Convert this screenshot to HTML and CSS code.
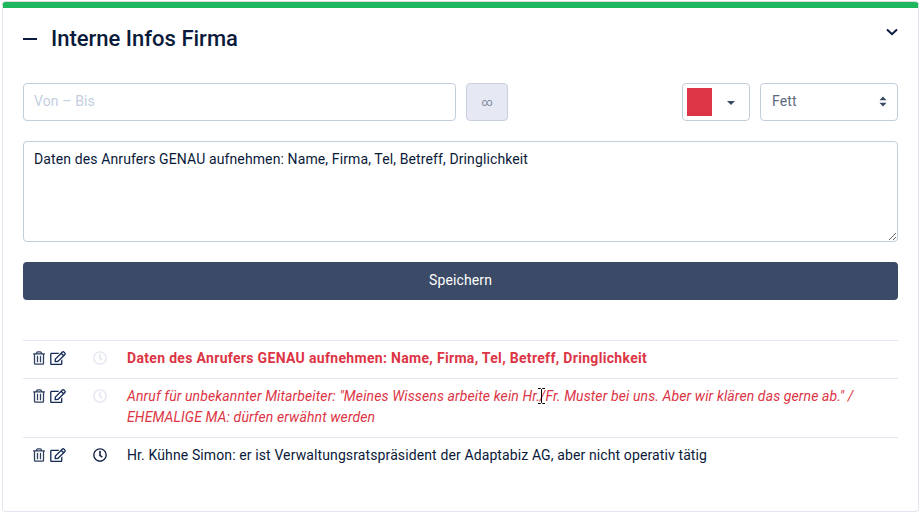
FILE: index.html
```html
<!DOCTYPE html>
<html lang="de">
<head>
<meta charset="utf-8">
<title>Interne Infos Firma</title>
<link rel="stylesheet" href="styles.css">
</head>
<body>
<section class="card">
  <header class="card-head">
    <span class="dash"></span>
    <h2 class="title">Interne Infos Firma</h2>
    <svg class="chevron" viewBox="0 0 12 8"><path d="M1 1.500 6 6.200 11 1.500" fill="none" stroke="currentColor" stroke-width="2"/></svg>
  </header>
  <div class="controls">
    <input class="field range" type="text" placeholder="Von – Bis">
    <button class="infinity" type="button">∞</button>
    <div class="spacer"></div>
    <div class="field color-pick"><span class="swatch"></span><span class="caret"></span></div>
    <div class="field weight">
      <span>Fett</span>
      <svg class="updown" viewBox="0 0 10 14"><path d="M5 0.500 9.500 5.500H.5zM5 13.500 .5 8.500H9.500z" fill="currentColor"/></svg>
    </div>
  </div>
  <textarea class="note">Daten des Anrufers GENAU aufnehmen: Name, Firma, Tel, Betreff, Dringlichkeit</textarea>
  <button class="save" type="button">Speichern</button>
  <ul class="list">
    <li class="row">
      <span class="icons">
        <svg class="ico trash" viewBox="0 0 448 512"><use href="#i-trash"/></svg>
        <svg class="ico edit" viewBox="0 0 576 512"><use href="#i-edit"/></svg>
      </span>
      <svg class="ico clock off" viewBox="0 0 512 512"><use href="#i-clock"/></svg>
      <p class="text strong">Daten des Anrufers GENAU aufnehmen: Name, Firma, Tel, Betreff, Dringlichkeit</p>
    </li>
    <li class="row">
      <span class="icons">
        <svg class="ico trash" viewBox="0 0 448 512"><use href="#i-trash"/></svg>
        <svg class="ico edit" viewBox="0 0 576 512"><use href="#i-edit"/></svg>
      </span>
      <svg class="ico clock off" viewBox="0 0 512 512"><use href="#i-clock"/></svg>
      <p class="text alert">Anruf für unbekannter Mitarbeiter: "Meines Wissens arbeite kein Hr./Fr. Muster bei uns. Aber wir klären das gerne ab." / EHEMALIGE MA: dürfen erwähnt werden</p>
      <svg class="cursor" viewBox="0 0 9 16"><path d="M1 .5H3.500L4.500 1.500 5.500 .5H8M4.500 1.500V14.500M1 15.500H3.500L4.500 14.500 5.500 15.500H8" fill="none" stroke="#000" stroke-width="1"/></svg>
    </li>
    <li class="row">
      <span class="icons">
        <svg class="ico trash" viewBox="0 0 448 512"><use href="#i-trash"/></svg>
        <svg class="ico edit" viewBox="0 0 576 512"><use href="#i-edit"/></svg>
      </span>
      <svg class="ico clock" viewBox="0 0 512 512"><use href="#i-clock"/></svg>
      <p class="text">Hr. Kühne Simon: er ist Verwaltungsratspräsident der Adaptabiz AG, aber nicht operativ tätig</p>
    </li>
  </ul>
</section>
<svg class="defs" aria-hidden="true">
  <defs>
    <path id="i-clock" fill="currentColor" d="M256 8C119 8 8 119 8 256s111 248 248 248 248-111 248-248S393 8 256 8zm0 448c-110.500 0-200-89.500-200-200S145.500 56 256 56s200 89.500 200 200-89.500 200-200 200zm61.800-104.400l-84.900-61.700c-3.100-2.300-4.900-5.900-4.900-9.700V116c0-6.600 5.400-12 12-12h32c6.600 0 12 5.400 12 12v141.700l66.800 48.600c5.400 3.900 6.500 11.400 2.600 16.800L334.600 349c-3.900 5.300-11.400 6.500-16.800 2.600z"/>
    <path id="i-trash" fill="currentColor" d="M268 416h24a12 12 0 0 0 12-12V188a12 12 0 0 0-12-12h-24a12 12 0 0 0-12 12v216a12 12 0 0 0 12 12zM432 80h-82.410l-34-56.700A48 48 0 0 0 274.410 0H173.590a48 48 0 0 0-41.160 23.300L98.410 80H16A16 16 0 0 0 0 96v16a16 16 0 0 0 16 16h16v336a48 48 0 0 0 48 48h288a48 48 0 0 0 48-48V128h16a16 16 0 0 0 16-16V96a16 16 0 0 0-16-16zM171.840 50.910A6 6 0 0 1 177 48h94a6 6 0 0 1 5.150 2.910L293.610 80H154.390zM368 464H80V128h288zm-212-48h24a12 12 0 0 0 12-12V188a12 12 0 0 0-12-12h-24a12 12 0 0 0-12 12v216a12 12 0 0 0 12 12z"/>
    <path id="i-edit" fill="currentColor" d="M402.300 344.900l32-32c5-5 13.700-1.500 13.700 5.700V464c0 26.500-21.500 48-48 48H48c-26.500 0-48-21.500-48-48V112c0-26.500 21.500-48 48-48h273.500c7.100 0 10.700 8.600 5.700 13.700l-32 32c-1.500 1.500-3.500 2.300-5.700 2.300H48v352h352V350.500c0-2.100.8-4.100 2.300-5.600zm156.600-201.800L296.300 405.700l-90.400 10c-26.200 2.900-48.500-19.200-45.600-45.600l10-90.400L432.900 17.100c22.900-22.900 59.900-22.900 82.700 0l43.200 43.200c22.900 22.900 22.900 60 .1 82.800zM460.100 174L402 115.900 216.200 301.800l-7.300 65.300 65.300-7.300L460.100 174zm64.800-79.700l-43.200-43.200c-4.100-4.100-10.800-4.100-14.800 0L436 82l58.100 58.100 30.900-30.900c4-4.200 4-10.800-.1-14.900z"/>
  </defs>
</svg>
</body>
</html>
```
FILE: styles.css
```css
* { box-sizing: border-box; }
html, body { margin: 0; height: 100%; background: #fff; }
body {
  padding: 2px;
  font-family: "Roboto", "Liberation Sans", sans-serif;
  font-size: 14px;
  line-height: 21px;
  letter-spacing: .115px;
  color: #0a1a3a;
  overflow: hidden;
}
.card {
  width: 917px;
  height: 510px;
  padding: 0 20px;
  border: 1px solid #e3e6f0;
  border-top: 6px solid #1cb75e;
  border-radius: 4px;
  box-shadow: 0 -1px 0 #dcdcdc;
}
.card-head {
  display: flex;
  align-items: center;
  height: 75px;
  padding-bottom: 14px;
}
.dash { width: 14px; height: 2px; background: #0b1a3d; }
.title {
  margin: 0 0 0 14px;
  flex: 1;
  font-size: 22px;
  line-height: 28px;
  font-weight: 500;
  letter-spacing: 0;
  color: #0a1a3a;
}
.chevron { width: 12px; height: 8px; margin: -13px 0 0; color: #0b1a3d; }
.controls { display: flex; align-items: stretch; height: 38px; }
.field {
  height: 38px;
  border: 1px solid #c3cedb;
  border-radius: 4px;
  background: #fff;
  font: inherit;
  letter-spacing: inherit;
  color: #5b6b80;
}
.range { width: 433px; padding: 0 10px 2px; outline: none; }
.range::placeholder { color: #c3cfde; opacity: 1; }
.infinity {
  width: 42px;
  margin-left: 10px;
  border: 1px solid #c8d0de;
  border-radius: 4px;
  background: #e6e9f4;
  color: #7a889c;
  font: inherit;
  font-size: 11px;
  padding: 0;
}
.spacer { flex: 1; }
.color-pick {
  width: 68px;
  display: flex;
  align-items: center;
  padding: 4px;
  margin-right: 10px;
}
.swatch { width: 25px; height: 28px; background: #dc3545; }
.caret {
  margin: 2px 0 0 15px;
  border-top: 4px solid #3b4a63;
  border-left: 4px solid transparent;
  border-right: 4px solid transparent;
}
.weight {
  width: 138px;
  display: flex;
  align-items: center;
  justify-content: space-between;
  padding: 0 10px 1px 11px;
}
.updown { width: 8px; height: 11px; color: #3b4a63; }
.note {
  display: block;
  width: 875px;
  height: 101px;
  margin-top: 20px;
  padding: 7px 10px 5px;
  border: 1px solid #c3cedb;
  border-radius: 4px;
  font: inherit;
  letter-spacing: inherit;
  color: #0a1a3a;
  outline: none;
}
.save {
  display: block;
  width: 875px;
  height: 38px;
  margin-top: 20px;
  padding: 0 0 2px;
  border: 0;
  border-radius: 4px;
  background: #3b4a66;
  color: #fff;
  font: inherit;
  letter-spacing: inherit;
}
.list { list-style: none; margin: 40px 0 0; padding: 0; }
.row {
  position: relative;
  display: flex;
  align-items: flex-start;
  padding: 7px 0 9px;
  border-top: 1px solid #e3e6f0;
}
.icons { display: flex; gap: 5px; width: 66px; padding: 3px 0 0 10px; flex: none; }
.ico { display: block; height: 14px; flex: none; }
.trash { width: 12px; color: #2f4060; }
.edit { width: 16px; color: #122a55; }
.clock { width: 14px; margin: 3px 0 0 4px; color: #0b1a3d; }
.clock.off { color: #e3e6f0; }
.text { margin: 0 0 0 20px; width: 740px; }
.strong { font-weight: 700; letter-spacing: .32px; color: #dc3545; }
.alert { font-style: italic; color: #dc3545; }
.cursor { position: absolute; left: 514px; top: 9px; width: 9px; height: 16px; }
.defs { position: absolute; width: 0; height: 0; }
```
